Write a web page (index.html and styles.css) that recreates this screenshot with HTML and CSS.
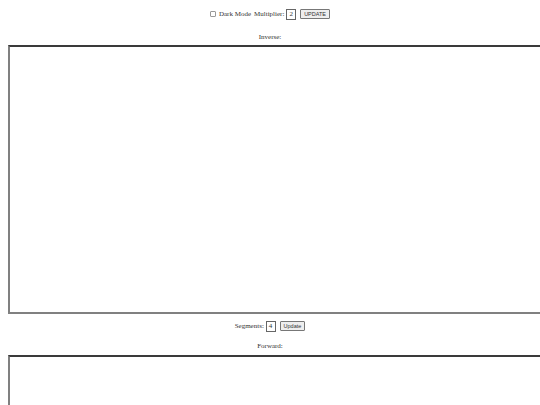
FILE: index.html
```
<!DOCTYPE html>
<html>
<head>
<meta charset="utf-8">
<link rel="stylesheet" href="styles.css">
</head>
<body>
<div class="controls">
  <label class="dm"><input type="checkbox" class="cb"> Dark Mode</label>
  <span class="lbl">Multiplier: <span class="num">2</span></span>
  <button class="btn upper">UPDATE</button>
</div>
<div class="title t1">Inverse:</div>
<div class="box box1"></div>
<div class="controls seg">
  <span class="lbl">Segments: <span class="num">4</span></span>
  <button class="btn small">Update</button>
</div>
<div class="title t2">Forward:</div>
<div class="box box2"></div>
</body>
</html>
```
FILE: styles.css
```
html, body { overflow: hidden; }
body {
  margin: 8px;
  font-family: "Liberation Serif", serif;
  font-size: 7px;
  color: #333;
  background: #fff;
  width: 700px;
  -webkit-font-smoothing: antialiased;
}
.controls {
  width: 540px;
  margin-left: -8px;
  display: flex;
  justify-content: center;
  align-items: center;
  gap: 3px;
  height: 12px;
}
.dm { display: flex; align-items: center; gap: 3px; }
.cb {
  appearance: none;
  width: 6px; height: 6px; margin: 0;
  border: 1px solid #999;
  border-radius: 1px;
  background: #fff;
}
.num {
  display: inline-block;
  border: 1px solid #666;
  padding: 0 2px;
  height: 9px;
  line-height: 9px;
  min-width: 4px;
  text-align: center;
}
.btn {
  font-family: "Liberation Sans", sans-serif;
  font-size: 5.5px;
  color: #333;
  border: 1px solid #777;
  background: #eee;
  padding: 0 3px;
  margin-left: 1px;
  height: 10px;
  line-height: 8px;
  border-radius: 1px;
}
.title {
  width: 540px;
  margin-left: -8px;
  text-align: center;
  height: 10px;
  line-height: 10px;
}
.t1 { margin-top: 12px; }
.t2 { margin-top: 9px; }
.box {
  border-style: solid;
  border-width: 2px;
  border-color: #3a3a3a #808080 #808080 #808080;
  width: 700px;
}
.box1 { height: 265px; margin-top: 3px; }
.box2 { height: 100px; margin-top: 4px; }
.seg { margin-top: 6px; }
```
